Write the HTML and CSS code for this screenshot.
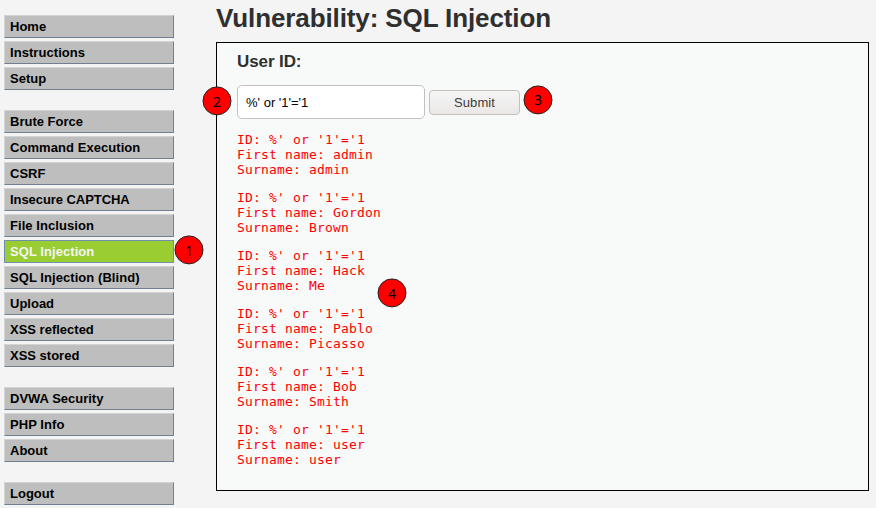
FILE: index.html
```html
<!DOCTYPE html>
<html lang="en">
<head>
<meta charset="utf-8">
<title>Vulnerability: SQL Injection</title>
<link rel="stylesheet" href="styles.css">
</head>
<body>
<div class="page">
<nav class="menu">
<ul><li>Home</li><li class="loose">Instructions</li><li>Setup</li></ul>
<ul><li>Brute Force</li><li class="loose">Command Execution</li><li>CSRF</li><li class="tight">Insecure CAPTCHA</li><li class="loose">File Inclusion</li><li class="selected loose">SQL Injection<span class="marker marker-1">1</span></li><li class="loose">SQL Injection (Blind)</li><li>Upload</li><li>XSS reflected</li><li>XSS stored</li></ul>
<ul><li>DVWA Security</li><li class="loose">PHP Info</li><li>About</li></ul>
<ul><li>Logout</li></ul>
</nav>
<main>
<h1>Vulnerability: SQL Injection</h1>
<section class="panel">
<h2>User ID:</h2>
<form class="query">
<input type="text" value="%' or '1'='1" aria-label="User ID">
<button type="button">Submit</button>
<span class="marker marker-2">2</span>
<span class="marker marker-3">3</span>
</form>
<div class="results">
<pre>ID: %' or '1'='1
First name: admin
Surname: admin</pre>
<pre>ID: %' or '1'='1
First name: Gordon
Surname: Brown</pre>
<pre>ID: %' or '1'='1
First name: Hack
Surname: Me</pre>
<pre>ID: %' or '1'='1
First name: Pablo
Surname: Picasso</pre>
<pre>ID: %' or '1'='1
First name: Bob
Surname: Smith</pre>
<pre>ID: %' or '1'='1
First name: user
Surname: user</pre>
<span class="marker marker-4">4</span>
</div>
</section>
</main>
</div>
</body>
</html>
```
FILE: styles.css
```css
* { box-sizing: border-box; }
body {
  margin: 0;
  height: 508px;
  overflow: hidden;
  background: #f4f4f4;
  color: #2f2f2f;
  font-family: "Liberation Sans", Arial, sans-serif;
}
.page { display: flex; gap: 42px; padding: 0 7px 0 4px; }
.menu {
  display: flex;
  flex-direction: column;
  gap: 20px;
  width: 170px;
  padding-top: 15px;
}
.menu ul {
  display: flex;
  flex-direction: column;
  gap: 3px;
  margin: 0;
  padding: 0;
  list-style: none;
}
.menu li {
  position: relative;
  height: 23px;
  padding-left: 5px;
  border: 1px solid;
  border-color: #d3d3d3 #708090 #708090 #d3d3d3;
  background: #bebebe;
  color: #000;
  font-size: 13px;
  font-weight: bold;
  line-height: 22px;
}
.menu .loose { letter-spacing: 0.06px; }
.menu .tight { letter-spacing: -0.06px; }
.menu .selected { border-color: #708eb0; background: #9acd32; color: #f4f4f4; }
main { flex: 1; }
h1 { margin: 0; height: 42px; font-size: 26px; line-height: 36px; letter-spacing: -0.11px; }
.panel {
  height: 449px;
  padding: 9px 20px 8px;
  border: 1px solid #000;
  background: #f8fafa;
}
h2 { margin: 0 0 13px; font-size: 17px; line-height: 20px; letter-spacing: -0.1px; }
.query { position: relative; display: flex; align-items: center; gap: 4px; height: 34px; }
.query input {
  width: 188px;
  height: 34px;
  padding: 0 8px;
  border: 1px solid #c5c0bb;
  border-radius: 5px;
  background: #fff;
  color: #000;
  font: 13px "Liberation Sans", Arial, sans-serif;
}
.query button {
  width: 91px;
  height: 25px;
  margin-top: 1px;
  padding: 0;
  border: 1px solid #c5c0bb;
  border-radius: 4px;
  background: linear-gradient(#f6f5f5, #e9e8e7);
  color: #3c3c3c;
  font: 13px "Liberation Sans", Arial, sans-serif;
  letter-spacing: 0.08px;
}
.results { position: relative; display: flex; flex-direction: column; gap: 13px; padding-top: 13px; }
pre {
  margin: 0;
  color: #f00;
  font: 13px/15px "DejaVu Sans Mono", monospace;
  letter-spacing: 0.174px;
}
.marker {
  position: absolute;
  width: 29px;
  height: 29px;
  border: 1px solid #222;
  border-radius: 50%;
  background: #f00;
  color: #000;
  font: 14px/29px "Noto Sans", "DejaVu Sans", sans-serif;
  letter-spacing: 0;
  text-align: center;
  transform: translate(0.5px, 0.4px);
}
.marker-1 { left: 169px; top: -6px; }
.marker-2 { left: -35px; top: 1px; }
.marker-3 { left: 286px; top: 0; line-height: 27px; }
.marker-4 { left: 140px; top: 159px; }
```
